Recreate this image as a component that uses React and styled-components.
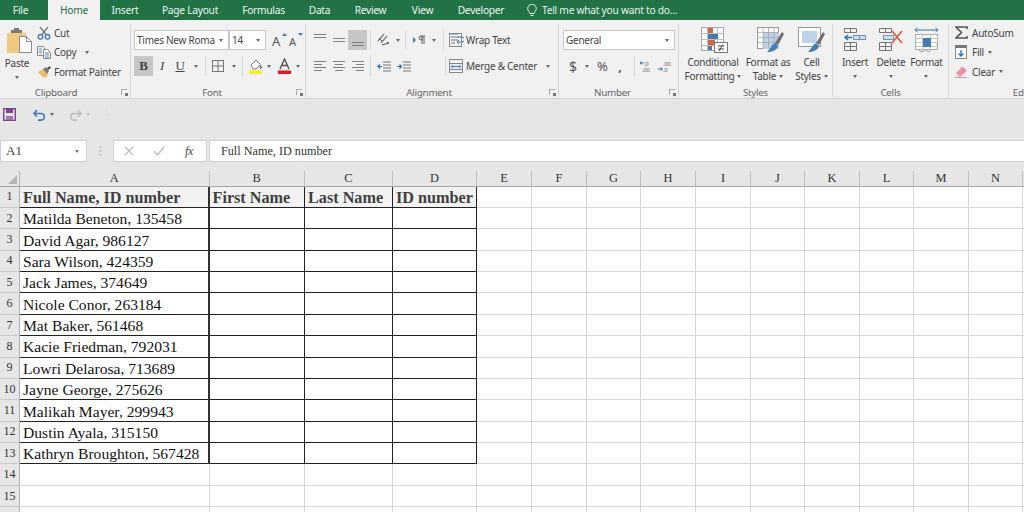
import React from "react";
import styled, { createGlobalStyle } from "styled-components";

const Global = createGlobalStyle`
  html, body { margin: 0; width: 1024px; height: 512px; overflow: hidden; background: #fff; }
  #root { width: 1024px; height: 512px; overflow: hidden; }
  svg { display: block; flex: none; }
`;
const UI = `"Noto Sans", "Open Sans", sans-serif`;
const SERIF = `"Liberation Serif", serif`;

const Page = styled.div`width:1024px;height:512px;overflow:hidden;display:flex;flex-direction:column;background:#e6e6e6;font-family:${UI};letter-spacing:-.25px;`;
const TabBar = styled.div`height:20px;flex:none;background:#217346;display:flex;align-items:stretch;font-size:10.2px;color:#fff;`;
const Tab = styled.div`width:${p=>p.$w}px;box-sizing:border-box;padding-right:${p=>p.$pr||0}px;display:flex;align-items:center;justify-content:center;white-space:nowrap;flex:none;
  ${p=>p.$active?"background:#f1f1f1;color:#217346;":"opacity:.93;"}`;
const TellMe = styled.div`display:flex;align-items:center;gap:5px;margin-left:11px;white-space:nowrap;opacity:.9;`;

const Ribbon = styled.div`height:79px;flex:none;box-sizing:border-box;background:#f1f1f1;border-bottom:1px solid #d2d2d2;padding:4px 0 1px;display:flex;color:#444;font-size:10px;overflow:hidden;`;
const Group = styled.div`width:${p=>p.$w}px;flex:none;box-sizing:border-box;border-right:${p=>p.$open?"0":"1px solid #d6d6d6"};display:flex;flex-direction:column;`;
const Body = styled.div`height:62px;display:flex;flex:none;${p=>p.$rows?"flex-direction:column;gap:6px;padding-top:6px;box-sizing:border-box;":""}`;
const Footer = styled.div`height:12px;position:relative;display:flex;align-items:center;justify-content:center;box-sizing:border-box;padding-right:${p=>p.$shift||0}px;padding-left:${p=>p.$left||0}px;color:#666;font-size:9.8px;white-space:nowrap;`;
const Launcher = styled.div`position:absolute;right:3px;top:3px;width:6px;height:6px;border-left:1px solid #aaa;border-top:1px solid #aaa;box-sizing:border-box;&::after{content:"";display:block;position:absolute;right:-1px;bottom:-1px;width:3px;height:3px;background:#777;}`;
const Row = styled.div`display:flex;align-items:center;height:20px;flex:none;padding-left:${p=>p.$pad||0}px;`;
const Slot = styled.div`width:${p=>p.$w}px;height:${p=>p.$h||20}px;flex:none;display:flex;align-items:center;justify-content:center;${p=>p.$on?"background:#c6c6c6;":""}`;
const VSep = styled.div`width:1px;height:20px;background:#d6d6d6;flex:none;`;
const Caret = styled.span`display:inline-block;flex:none;width:0;height:0;border-left:2.5px solid transparent;border-right:2.5px solid transparent;border-top:3px solid ${p=>p.$c||"#666"};margin-left:${p=>p.$ml||0}px;`;
const Field = styled.div`width:${p=>p.$w}px;height:20px;box-sizing:border-box;flex:none;background:#fff;border:1px solid #c8c8c8;display:flex;align-items:center;justify-content:space-between;padding:0 5px 0 2px;white-space:nowrap;overflow:hidden;font-size:10px;color:#444;margin-right:${p=>p.$mr||0}px;`;
const Glyph = styled.span`font-family:${SERIF};font-size:${p=>p.$s||12}px;font-weight:${p=>p.$b?700:400};font-style:${p=>p.$i?"italic":"normal"};text-decoration:${p=>p.$u?"underline":"none"};color:#444;`;
const SansGlyph = styled.span`font-size:${p=>p.$s||13}px;color:#555;letter-spacing:0;font-weight:${p=>p.$b?700:400};`;

const PasteCol = styled.div`width:34px;display:flex;flex-direction:column;align-items:center;flex:none;margin-right:3px;`;
const PasteWrap = styled.div`height:26px;margin:3px 0 3px 4px;flex:none;`;
const SmallCol = styled.div`display:flex;flex-direction:column;flex:none;margin-top:-1px;`;
const SmallRow = styled.div`height:19.5px;display:flex;align-items:center;gap:${p=>p.$g||3}px;white-space:nowrap;`;
const BigCol = styled.div`width:${p=>p.$w}px;margin-left:${p=>p.$ml||0}px;flex:none;display:flex;flex-direction:column;align-items:center;padding-top:3px;line-height:14px;white-space:nowrap;`;
const IconBox = styled.div`height:26px;flex:none;padding-left:${p=>p.$nudge||0}px;`;
const BigText = styled.div`margin-top:2px;display:flex;flex-direction:column;align-items:center;`;
const TextCaret = styled.div`display:flex;align-items:center;gap:3px;height:14px;`;
const EditCol = styled(SmallCol)`margin-left:6px;`;

const Qat = styled.div`height:41px;flex:none;display:flex;align-items:flex-start;padding-top:9px;box-sizing:border-box;`;
const FormulaBar = styled.div`height:22px;flex:none;display:flex;`;
const NameBox = styled.div`width:87px;box-sizing:border-box;background:#fff;border:1px solid #cfcfcf;display:flex;align-items:center;justify-content:space-between;padding:0 7px 0 5px;font:13px ${SERIF};letter-spacing:0;color:#444;flex:none;`;
const Grip = styled.div`width:26px;flex:none;display:flex;align-items:center;justify-content:center;`;
const FxBox = styled.div`width:94px;box-sizing:border-box;background:#fff;border:1px solid #cfcfcf;display:flex;align-items:center;flex:none;margin-right:2px;`;
const FormulaInput = styled.div`flex:1;box-sizing:border-box;background:#fff;border:1px solid #cfcfcf;border-right:0;display:flex;align-items:center;padding-left:11px;font:12.2px ${SERIF};letter-spacing:0;color:#333;`;
const Spacer = styled.div`height:9px;flex:none;`;
const Mirror = styled.div`transform:scaleX(-1);`;

const COLS = [189.5,95.5,88,84,55,55,54,55,55,54,55,54,55,54,20];
const Sheet = styled.div`flex:1;min-height:0;background:#fff;display:grid;grid-template-columns:20px ${COLS.map(c=>c+"px").join(" ")};grid-template-rows:15.6px repeat(16,21.38px);font-family:${SERIF};letter-spacing:0;overflow:hidden;`;
const Corner = styled.div`background:#e6e6e6;border-right:1px solid #b9b9b9;border-bottom:1px solid #9f9f9f;position:relative;
  &::after{content:"";position:absolute;right:2px;bottom:2px;border-left:9px solid transparent;border-bottom:9px solid #b4b4b4;}`;
const ColHead = styled.div`box-sizing:border-box;background:#e6e6e6;border-right:1px solid #bdbdbd;border-bottom:1px solid #a6a6a6;display:flex;align-items:center;justify-content:center;font-size:12.4px;color:#333;`;
const RowHead = styled.div`box-sizing:border-box;background:#e6e6e6;border-right:1px solid #b0b0b0;border-bottom:1px solid #c9c9c9;display:flex;align-items:center;justify-content:center;font-size:12px;color:#333;`;
const Cell = styled.div`box-sizing:border-box;min-width:0;white-space:nowrap;padding:${p=>p.$head?3:2}px 0 0 3px;display:flex;align-items:center;
  font-size:${p=>p.$head?16.2:15.6}px;
  background:${p=>p.$head?"#f2f2f2":"#fff"};font-weight:${p=>p.$head?700:400};color:${p=>p.$head?"#404040":"#111"};
  border-right:${p=>p.$thick?"2.5px solid #333":p.$framed?"1px solid #222":"1px solid #d6d6d6"};
  border-bottom:${p=>p.$framed?"1px solid #222":"1px solid #d6d6d6"};`;

const S = ({w,h,children}) => <svg width={w} height={h} viewBox={`0 0 ${w} ${h}`} fill="none">{children}</svg>;
const Lines = ({ys,c="#808080",xs}) => <S w={12} h={12}>{ys.map((y,i)=>(<path key={i} d={`M${xs?xs[i][0]:0} ${y+.5}H${xs?xs[i][1]:12}`} stroke={c}/>))}</S>;

const PasteIcon = () => <S w={27} h={26}>
  <rect x="1" y="6" width="19" height="20" fill="#f0c97f"/>
  <path d="M5 6V3h3V1h5v2h3v3z" fill="#7a7a7a"/>
  <path d="M13.5 9.5h7l5 5v11h-12z" fill="#fff" stroke="#8c8c8c"/>
  <path d="M20.5 9.5v5h5" stroke="#8c8c8c"/>
</S>;
const CutIcon = () => <S w={14} h={14}>
  <path d="M3 1l6.5 8M11 1L4.5 9" stroke="#777" strokeWidth="1.3"/>
  <circle cx="3.5" cy="10.8" r="2.3" stroke="#3f7cb8" strokeWidth="1.3"/>
  <circle cx="10.5" cy="10.8" r="2.3" stroke="#3f7cb8" strokeWidth="1.3"/>
</S>;
const CopyIcon = () => <S w={14} h={14}>
  <path d="M.5 1.5h6l1 1v8h-7z" fill="#fff" stroke="#888"/>
  <path d="M6.5 4.5h4l3 3v6h-7z" fill="#fff" stroke="#888"/>
  <path d="M2 4h3M2 6h3M2 8h3M8 8h4M8 10h4M8 12h4" stroke="#4d87c0"/>
</S>;
const PainterIcon = () => <S w={14} h={14}>
  <path d="M1 7l5-3 5 6-3 3C6 12 3 10 1 7z" fill="#e7bc6a"/>
  <path d="M6 4l3-2 3 4-2 3z" fill="#777"/><path d="M10 3l3-2 1 2-3 2z" fill="#555"/>
</S>;
const GrowA = ({up}) => <S w={16} h={18}>
  <text x={up?0:1} y="15" fontFamily={UI} fontSize={up?13:11} fill="#555">A</text>
  <path d={up?"M10 5l2.500-3L15 5z":"M10 2h5l-2.500 3z"} fill="#3f7cb8"/>
</S>;
const BordersIcon = () => <S w={12} h={12}><rect x=".5" y=".5" width="11" height="11" stroke="#777"/><path d="M6 0v12M0 6h12" stroke="#777"/></S>;
const FillIcon = () => <S w={15} h={16}>
  <path d="M3 7l5-5 4.500 4.500-4.500 4.500H5z" fill="#fff" stroke="#777"/><path d="M12.500 7c1 1.200 1.500 2 1.500 2.600a1.200 1.200 0 0 1-2.400 0c0-.6.4-1.400.9-2.600z" fill="#3f7cb8"/>
  <rect x="1" y="12.500" width="13" height="3.500" fill="#f5f01a"/>
</S>;
const ColorA = () => <S w={15} h={16}>
  <path d="M3 11L7.500 1 12 11M4.600 7.500h5.800" stroke="#555" strokeWidth="1.400"/>
  <rect x="1" y="12.500" width="13" height="3.500" fill="#e8171d"/>
</S>;
const OrientIcon = () => <S w={15} h={14}>
  <path d="M2 8L8 1M5 10l6-7" stroke="#888" strokeWidth="1.500"/><path d="M6 12l7-2-2-1M3 5l3 3" stroke="#555"/>
</S>;
const RtlIcon = () => <S w={12} h={10}>
  <path d="M0 2l3 3-3 3z" fill="#3f7cb8"/><path d="M7 1h5M8 1a2 2 0 0 0 0 4h1V1M9 1v8M11 1v8" stroke="#666"/>
</S>;
const WrapIcon = () => <S w={15} h={15}>
  <rect x=".5" y=".5" width="12" height="13" stroke="#8a8a8a"/>
  <path d="M0 1h9" stroke="#5a93cb"/>
  <path d="M2 4h8M2 7h7M2 10h4" stroke="#777"/>
  <path d="M9 4h4a1.500 1.500 0 0 1 0 5H8m2-2L8 9l2 2" stroke="#3f7cb8"/>
</S>;
const MergeIcon = () => <S w={15} h={15}>
  <rect x=".5" y=".5" width="13" height="13" stroke="#888"/><path d="M0 4.500h14M0 10.500h14" stroke="#888"/>
  <rect x="1" y="5" width="12" height="5" fill="#dbe7f3"/><path d="M3 7.500h8M3 6v3M11 6v3" stroke="#3f7cb8"/>
</S>;
const IndentIcon = ({inc}) => <S w={14} h={11}>
  <path d="M6 1h8M6 4h8M6 7h8M6 10h8" stroke="#777"/>
  <path d={inc?"M0 5.500h4M2.500 3.500l2 2-2 2":"M5 5.500H1M3 3.500l-2 2 2 2"} stroke="#2a76bb" strokeWidth="1.200"/>
</S>;
const DecIcon = ({more}) => <S w={14} h={13}>
  <text x="5" y="5.500" fontFamily={UI} fontSize="6" fill="#666">{more?".00":".0"}</text>
  <text x={more?5:3} y="11.500" fontFamily={UI} fontSize="6" fill="#666">{more?".0":".00"}</text>
  <path d={more?"M0 9h4M2.500 7.500l2 1.500-2 1.500":"M5 3H1M2.500 1.500L1 3l1.500 1.500"} stroke="#2a76bb"/>
</S>;
const CondIcon = () => <S w={27} h={26}>
  <rect x=".5" y=".5" width="22" height="23" fill="#fff" stroke="#a5a5a5"/>
  <path d="M.5 6.500h22M.5 12.500h22M.5 18.500h22M6.500 0v24M16.500 0v24" stroke="#bdbdbd"/>
  <rect x="7" y="1" width="5" height="5" fill="#d9603b"/><rect x="7" y="7" width="10" height="5" fill="#3f7cb8"/>
  <rect x="7" y="13" width="7" height="5" fill="#d9603b"/><rect x="7" y="19" width="4" height="4" fill="#3f7cb8"/>
  <rect x="13.500" y="15.500" width="13" height="10" fill="#fff" stroke="#777"/>
  <path d="M17 19h6M17 22h6M22 17.500l-4 6.500" stroke="#444"/>
</S>;
const TableIcon = () => <S w={27} h={26}>
  <rect x=".5" y=".5" width="21" height="21" fill="#fff" stroke="#999"/>
  <rect x="6" y="5" width="16" height="17" fill="#bdd0e6"/>
  <path d="M.5 5.500h21M.5 10.500h21M.5 15.500h21M6 0v22M11.500 0v22M17 0v22" stroke="#9fa9b4" strokeWidth=".8"/>
  <path d="M18 16l7-11 2 2-6 11z" fill="#6e6e6e"/><path d="M18 16l3 3c-1 4-6 6-11 6 3-2 4-7 8-9z" fill="#3f7cb8"/>
</S>;
const CellStyleIcon = () => <S w={27} h={26}>
  <rect x=".5" y=".5" width="22" height="19" fill="#fff" stroke="#999"/>
  <rect x="4" y="4" width="15" height="12" fill="#bdd3ea"/>
  <path d="M18 16l7-11 2 2-6 11z" fill="#6e6e6e"/><path d="M18 16l3 3c-1 4-6 6-11 6 3-2 4-7 8-9z" fill="#3f7cb8"/>
</S>;
const InsertIcon = () => <S w={24} h={24}>
  <path d="M1.500 1.500h12v4h-12zM7.500 1.500v4M1.500 15.500h12v8h-12zM1.500 19.500h12M7.500 15.500v8" stroke="#777"/>
  <rect x="10.500" y="8.500" width="12" height="4" fill="#cfdfef" stroke="#6e95bd"/><path d="M16.500 8.500v4" stroke="#6e95bd"/>
  <path d="M9 10.500H2M5 8L2 10.500 5 13" stroke="#2a76bb" strokeWidth="1.500"/>
</S>;
const DeleteIcon = () => <S w={26} h={24}>
  <path d="M1.500 1.500h12v4h-12zM7.500 1.500v4M1.500 15.500h12v8h-12zM1.500 19.500h12M7.500 15.500v8" stroke="#777"/>
  <rect x="5.500" y="8.500" width="10" height="4" fill="#cfdfef" stroke="#6e95bd"/>
  <path d="M14 4l10 12M24 4L14 16" stroke="#dd5a37" strokeWidth="1.600"/>
</S>;
const FormatIcon = () => <S w={25} h={26}>
  <path d="M1 3h23M1 3l2.500-2M1 3l2.500 2M24 3l-2.500-2M24 3l-2.500 2" stroke="#2a76bb"/>
  <rect x="1.500" y="7.500" width="22" height="15" fill="#fff" stroke="#aaa"/>
  <path d="M1.500 11.500h22M1.500 15.500h22M1.500 19.500h22M8.500 7v16M16.500 7v16" stroke="#c4c4c4"/>
  <rect x="9" y="11" width="8" height="9" fill="#3f7cb8"/>
  <path d="M5 23c1 2 5 2 6 0M12 23c1 2 4 2 5 0" stroke="#999"/>
</S>;
const SigmaIcon = () => <S w={13} h={13}><path d="M12 3V1H1l5.500 5.500L1 12h11v-2" stroke="#555" strokeWidth="1.600"/></S>;
const FillDown = () => <S w={13} h={14}>
  <rect x=".5" y=".5" width="11" height="13" fill="#fff" stroke="#888"/><rect x="0" y="0" width="12" height="3" fill="#777"/>
  <path d="M6 5v6M3.500 8.500L6 11l2.500-2.500" stroke="#2a76bb" strokeWidth="1.400"/>
</S>;
const Eraser = () => <S w={13} h={13}>
  <path d="M1 8l6-6a1 1 0 0 1 1.400 0l3.500 3.500-6 6H4z" fill="#ef8fa0"/><path d="M0 12.500h12" stroke="#aaa"/>
</S>;
const SaveIcon = () => <S w={13} h={13}>
  <rect x=".7" y=".7" width="11.600" height="11.600" stroke="#7d3f98" strokeWidth="1.400"/>
  <rect x="3" y="1" width="7" height="4" fill="#7d3f98"/><rect x="3" y="8" width="7" height="4" fill="#9f76b4"/>
</S>;
const UndoIcon = ({c}) => <S w={13} h={12}>
  <path d="M4 1L1 4.500 4 7.500M1.500 4.500H8a3.300 3.300 0 0 1 0 6.600H5" stroke={c} strokeWidth="1.600"/>
</S>;
const BulbIcon = () => <S w={10} h={13}>
  <path d="M3 9.500C2.500 7.500 .7 7 .7 4.500a4.300 4.300 0 0 1 8.600 0C9.300 7 7.500 7.500 7 9.500zM3.500 11.500h3" stroke="#fff"/>
</S>;
const XIcon = () => <S w={10} h={10}><path d="M1 1l8 8M9 1L1 9" stroke="#bdbdbd" strokeWidth="1.300"/></S>;
const CheckIcon = () => <S w={12} h={10}><path d="M1 5l3.500 4L11 1" stroke="#bdbdbd" strokeWidth="1.400"/></S>;
const GripDots = ({c="#aaa"}) => <S w={3} h={12}><path d="M1.500 1v1.500M1.500 5v1.500M1.500 9v1.500" stroke={c} strokeWidth="1.500"/></S>;

const NAMES = ["Full Name, ID number","Matilda Beneton, 135458","David Agar, 986127","Sara Wilson, 424359","Jack James, 374649","Nicole Conor, 263184","Mat Baker, 561468","Kacie Friedman, 792031","Lowri Delarosa, 713689","Jayne George, 275626","Malikah Mayer, 299943","Dustin Ayala, 315150","Kathryn Broughton, 567428"];
const HEAD = ["", "First Name","Last Name","ID number"];
const LETTERS = "ABCDEFGHIJKLMNO".split("");
const TABS = [["File",48,0,7],["Home",52,1],["Insert",50],["Page Layout",80],["Formulas",67],["Data",45],["Review",57],["View",47],["Developer",70]];

export default function App() {
  return <Page>
    <Global />
    <TabBar>
      {TABS.map(([t,w,a,pr]) => <Tab key={t} $w={w} $active={a} $pr={pr}>{t}</Tab>)}
      <TellMe><BulbIcon />Tell me what you want to do...</TellMe>
    </TabBar>
    <Ribbon>
      <Group $w={131}>
        <Body>
          <PasteCol>
            <PasteWrap><PasteIcon /></PasteWrap>
            <span>Paste</span>
            <TextCaret><Caret /></TextCaret>
          </PasteCol>
          <SmallCol>
            <SmallRow><CutIcon />Cut</SmallRow>
            <SmallRow><CopyIcon />Copy<Caret $ml={6} /></SmallRow>
            <SmallRow><PainterIcon />Format Painter</SmallRow>
          </SmallCol>
        </Body>
        <Footer $shift={18}>Clipboard<Launcher /></Footer>
      </Group>
      <Group $w={175}>
        <Body $rows>
          <Row $pad={3}>
            <Field $w={95}>Times New Roma<Caret /></Field>
            <Field $w={37} $mr={6}>14<Caret /></Field>
            <Slot $w={16}><GrowA up /></Slot><Slot $w={16}><GrowA /></Slot>
          </Row>
          <Row $pad={3}>
            <Slot $w={19} $on><Glyph $b $s={13}>B</Glyph></Slot>
            <Slot $w={18}><Glyph $i $s={13}>I</Glyph></Slot>
            <Slot $w={18}><Glyph $u $s={13}>U</Glyph></Slot>
            <Slot $w={14}><Caret /></Slot>
            <Slot $w={4}><VSep /></Slot>
            <Slot $w={22}><BordersIcon /></Slot>
            <Slot $w={9}><Caret /></Slot>
            <Slot $w={8}><VSep /></Slot>
            <Slot $w={18}><FillIcon /></Slot>
            <Slot $w={10}><Caret /></Slot>
            <Slot $w={20}><ColorA /></Slot>
            <Slot $w={8}><Caret /></Slot>
          </Row>
        </Body>
        <Footer $shift={12}>Font<Launcher /></Footer>
      </Group>
      <Group $w={253}>
        <Body $rows>
          <Row $pad={4}>
            <Slot $w={19}><Lines ys={[0,3]} /></Slot>
            <Slot $w={19}><Lines ys={[4,7]} /></Slot>
            <Slot $w={19} $on><Lines ys={[8,11]} /></Slot>
            <Slot $w={6}><VSep /></Slot>
            <Slot $w={21}><OrientIcon /></Slot>
            <Slot $w={7}><Caret /></Slot>
            <Slot $w={8}><VSep /></Slot>
            <Slot $w={20}><RtlIcon /></Slot>
            <Slot $w={10}><Caret /></Slot>
            <Slot $w={8}><VSep /></Slot>
            <Slot $w={19}><WrapIcon /></Slot>
            <span>Wrap Text</span>
          </Row>
          <Row $pad={4}>
            <Slot $w={19}><Lines ys={[1,4,7,10]} xs={[[0,12],[0,8],[0,12],[0,8]]} /></Slot>
            <Slot $w={19}><Lines ys={[1,4,7,10]} xs={[[0,12],[2,10],[0,12],[2,10]]} /></Slot>
            <Slot $w={19}><Lines ys={[1,4,7,10]} xs={[[0,12],[4,12],[0,12],[4,12]]} /></Slot>
            <Slot $w={6}><VSep /></Slot>
            <Slot $w={21}><IndentIcon /></Slot>
            <Slot $w={19}><IndentIcon inc /></Slot>
            <Slot $w={30} />
            <Slot $w={4}><VSep /></Slot>
            <Slot $w={19}><MergeIcon /></Slot>
            <span>Merge &amp; Center</span>
            <Caret $ml={9} />
          </Row>
        </Body>
        <Footer $shift={6}>Alignment<Launcher /></Footer>
      </Group>
      <Group $w={120}>
        <Body $rows>
          <Row $pad={4}><Field $w={112}>General<Caret /></Field></Row>
          <Row $pad={8}>
            <Slot $w={12}><SansGlyph $s={14}>$</SansGlyph></Slot>
            <Slot $w={16}><Caret /></Slot>
            <Slot $w={15}><SansGlyph $s={13}>%</SansGlyph></Slot>
            <Slot $w={20}><SansGlyph $b $s={12}>,</SansGlyph></Slot>
            <Slot $w={8}><VSep /></Slot>
            <Slot $w={16}><DecIcon /></Slot>
            <Slot $w={22}><DecIcon more /></Slot>
          </Row>
        </Body>
        <Footer $shift={12}>Number<Launcher /></Footer>
      </Group>
      <Group $w={154}>
        <Body>
          <BigCol $w={66} $ml={1}><IconBox $nudge={2}><CondIcon /></IconBox><BigText>Conditional<TextCaret>Formatting<Caret /></TextCaret></BigText></BigCol>
          <BigCol $w={44}><IconBox $nudge={4}><TableIcon /></IconBox><BigText>Format as<TextCaret>Table<Caret /></TextCaret></BigText></BigCol>
          <BigCol $w={43}><IconBox><CellStyleIcon /></IconBox><BigText>Cell<TextCaret>Styles<Caret /></TextCaret></BigText></BigCol>
        </Body>
        <Footer>Styles</Footer>
      </Group>
      <Group $w={116}>
        <Body>
          <BigCol $w={44}><IconBox><InsertIcon /></IconBox><BigText>Insert<TextCaret><Caret /></TextCaret></BigText></BigCol>
          <BigCol $w={28}><IconBox><DeleteIcon /></IconBox><BigText>Delete<TextCaret><Caret /></TextCaret></BigText></BigCol>
          <BigCol $w={43}><IconBox><FormatIcon /></IconBox><BigText>Format<TextCaret><Caret /></TextCaret></BigText></BigCol>
        </Body>
        <Footer>Cells</Footer>
      </Group>
      <Group $w={80} $open>
        <Body>
          <EditCol>
            <SmallRow $g={4}><SigmaIcon />AutoSum</SmallRow>
            <SmallRow $g={4}><FillDown />Fill<Caret /></SmallRow>
            <SmallRow $g={4}><Eraser />Clear<Caret /></SmallRow>
          </EditCol>
        </Body>
        <Footer $left={78}>Editing</Footer>
      </Group>
    </Ribbon>
    <Qat>
      <Slot $w={3} $h={13} />
      <Slot $w={13} $h={13}><SaveIcon /></Slot>
      <Slot $w={16} $h={13} />
      <Slot $w={14} $h={13}><UndoIcon c="#3f7cb8" /></Slot>
      <Slot $w={12} $h={13}><Caret /></Slot>
      <Slot $w={10} $h={13} />
      <Slot $w={14} $h={13}><Mirror><UndoIcon c="#bdbdbd" /></Mirror></Slot>
      <Slot $w={12} $h={13}><Caret $c="#c4c4c4" /></Slot>
      <Slot $w={11} $h={13} />
      <Slot $w={3} $h={13}><GripDots c="#dadada" /></Slot>
    </Qat>
    <FormulaBar>
      <NameBox>A1<Caret $c="#777" /></NameBox>
      <Grip><GripDots /></Grip>
      <FxBox>
        <Slot $w={29}><XIcon /></Slot>
        <Slot $w={31}><CheckIcon /></Slot>
        <Slot $w={30}><Glyph $i $s={12}>fx</Glyph></Slot>
      </FxBox>
      <FormulaInput>Full Name, ID number</FormulaInput>
    </FormulaBar>
    <Spacer />
    <Sheet>
      <Corner />
      {LETTERS.map(l => <ColHead key={l}>{l === "O" ? "" : l}</ColHead>)}
      {Array.from({length:16}).map((_, r) => <React.Fragment key={r}>
        <RowHead>{r < 15 ? r + 1 : ""}</RowHead>
        {LETTERS.map((l, c) => {
          const framed = r < 13 && c < 4;
          const text = r < 13 ? (c === 0 ? NAMES[r] : r === 0 && c < 4 ? HEAD[c] : "") : "";
          return <Cell key={l} $framed={framed} $thick={framed && c === 0} $head={r === 0 && c < 4}>{text}</Cell>;
        })}
      </React.Fragment>)}
    </Sheet>
  </Page>;
}
